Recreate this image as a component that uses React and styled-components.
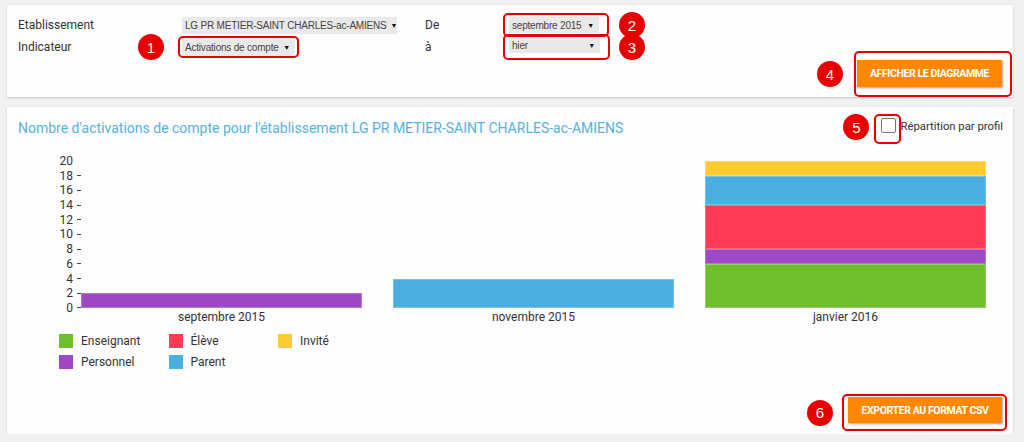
import React from 'react'
import styled, { createGlobalStyle } from 'styled-components'

const GlobalStyle = createGlobalStyle`
  body {
    margin: 0;
    background: #f1f1f1;
    font-family: Roboto, "Liberation Sans", sans-serif;
    color: #333;
  }
`

const UNIT = 7.35

const COLORS = {
  enseignant: '#6fbe2e',
  eleve: '#ff3a55',
  invite: '#ffcb33',
  personnel: '#9e48c4',
  parent: '#4aaee0',
}

const Page = styled.div`
  display: flex;
  flex-direction: column;
  gap: 10px;
  padding: 5px 11px 0 7px;
`

const Card = styled.div`
  background: #fdfdfd;
  box-shadow: 0 1px 2px rgba(0, 0, 0, 0.18);
`

const FilterCard = styled(Card)`
  display: flex;
  justify-content: space-between;
  align-items: flex-end;
  height: 92px;
  box-sizing: border-box;
  padding: 9px 1px 0 11px;
`

const FormGrid = styled.div`
  align-self: flex-start;
  display: grid;
  grid-template-columns: 120px 40px 247px 78px 110px 40px;
  grid-auto-rows: 22px;
  align-items: center;
`

const Label = styled.span`
  font-size: 12px;
  color: #333;
`

const Highlight = styled.div`
  display: inline-flex;
  align-items: center;
  justify-self: start;
  border: 2px solid ${p => (p.$on ? '#e80000' : 'transparent')};
  border-radius: 5px;
  padding: ${p => p.$pad || '0 2px'};
`

const Select = styled.div`
  display: flex;
  align-items: center;
  gap: 4px;
  width: ${p => p.$w}px;
  height: ${p => p.$h || 17}px;
  box-sizing: border-box;
  padding: 0 5px 0 3px;
  background: #e9e9e9;
  font: 10px "Liberation Sans", Arial, sans-serif;
  letter-spacing: -0.2px;
  color: #444;
  white-space: nowrap;
`

const Arrow = styled.span`
  margin-left: auto;
  font-size: 7px;
  color: #111;
`

const Badge = styled.span`
  display: inline-flex;
  align-items: center;
  justify-content: center;
  flex: none;
  justify-self: start;
  width: 26px;
  height: 26px;
  margin-left: ${p => p.$ml || 0}px;
  border-radius: 50%;
  background: #e80000;
  color: #fff;
  font: 15px "Liberation Sans", Arial, sans-serif;
`

const ActionGroup = styled.div`
  display: flex;
  align-items: center;
  gap: ${p => p.$gap}px;
`

const OrangeButton = styled.button`
  width: ${p => p.$w}px;
  height: ${p => p.$h}px;
  padding: 0;
  border: 0;
  background: #ff8800;
  color: #fff;
  font: 700 10.5px Roboto, "Liberation Sans", sans-serif;
  letter-spacing: -0.4px;
  box-shadow: 1px 1px 2px rgba(0, 0, 0, 0.35);
`

const ChartCard = styled(Card)`
  display: flex;
  flex-direction: column;
  padding: 7px 10px 3px 11px;
`

const ChartHeader = styled.div`
  display: flex;
  align-items: flex-start;
  justify-content: space-between;
`

const Title = styled.h2`
  margin: 6px 0 0;
  font-size: 14px;
  line-height: 17px;
  font-weight: 400;
  color: #57b2e1;
`

const ProfileToggle = styled.div`
  display: flex;
  align-items: flex-start;
`

const CheckBox = styled.span`
  display: block;
  width: 15px;
  height: 15px;
  box-sizing: border-box;
  border: 1px solid #777;
  border-radius: 2px;
  background: #fff;
`

const ToggleText = styled.span`
  margin: 6px 0 0 -1px;
  font-size: 11.3px;
  line-height: 14px;
`

const Chart = styled.div`
  display: flex;
  margin-top: 10px;
`

const YAxis = styled.div`
  display: flex;
  flex-direction: column;
  justify-content: space-between;
  width: 63px;
  height: 161px;
`

const Tick = styled.div`
  display: flex;
  align-items: center;
  justify-content: flex-end;
  font-size: 12px;
  line-height: 14px;
  &::after {
    content: '';
    width: 4px;
    height: 1px;
    margin-left: 4px;
    background: ${p => (p.$mark ? '#444' : 'transparent')};
  }
`

const Plot = styled.div`
  display: flex;
  gap: 31px;
  width: 905px;
  margin-top: 7px;
`

const Column = styled.div`
  flex: 1;
  display: flex;
  flex-direction: column;
`

const BarArea = styled.div`
  display: flex;
  flex-direction: column-reverse;
  height: 147px;
`

const Segment = styled.div`
  background: ${p => p.$color};
  box-shadow: inset 0 0 0 1px rgba(255, 255, 255, 0.25);
`

const XLabel = styled.div`
  margin-top: 2px;
  text-align: center;
  font-size: 12px;
  line-height: 14px;
`

const Legend = styled.div`
  display: grid;
  grid-template-columns: repeat(3, 109.5px);
  row-gap: 7px;
  margin: 10px 0 0 41px;
`

const LegendItem = styled.div`
  display: flex;
  align-items: center;
  gap: 8px;
  font-size: 12px;
  line-height: 14px;
  &::before {
    content: '';
    width: 14px;
    height: 14px;
    background: ${p => p.$color};
  }
`

const Footer = styled.div`
  display: flex;
  justify-content: flex-end;
  margin: 25px -4px 0 0;
`

const ticks = [20, 18, 16, 14, 12, 10, 8, 6, 4, 2, 0]

const bars = [
  { label: 'septembre 2015', parts: [['personnel', 2]] },
  { label: 'novembre 2015', parts: [['parent', 4]] },
  {
    label: 'janvier 2016',
    parts: [['enseignant', 6], ['personnel', 2], ['eleve', 6], ['parent', 4], ['invite', 2]],
  },
]

const legend = [
  ['enseignant', 'Enseignant'],
  ['eleve', 'Élève'],
  ['invite', 'Invité'],
  ['personnel', 'Personnel'],
  ['parent', 'Parent'],
]

function Filters() {
  return (
    <FilterCard>
      <FormGrid>
        <Label>Etablissement</Label>
        <span />
        <Highlight>
          <Select $w={215}>LG PR METIER-SAINT CHARLES-ac-AMIENS<Arrow>▼</Arrow></Select>
        </Highlight>
        <Label>De</Label>
        <Highlight $on $pad="2px 8px 2px 4px">
          <Select $w={90} $h={16}>septembre 2015<Arrow>▼</Arrow></Select>
        </Highlight>
        <Badge $ml={6}>2</Badge>

        <Label>Indicateur</Label>
        <Badge>1</Badge>
        <Highlight $on>
          <Select $w={113} $h={18}>Activations de compte<Arrow>▼</Arrow></Select>
        </Highlight>
        <Label>à</Label>
        <Highlight $on $pad="1px 8px 5px 4px">
          <Select $w={91} $h={16}>hier<Arrow>▼</Arrow></Select>
        </Highlight>
        <Badge $ml={6}>3</Badge>
      </FormGrid>

      <ActionGroup $gap={11}>
        <Badge>4</Badge>
        <Highlight $on $pad="7px 8px 8px 1px">
          <OrangeButton $w={145} $h={27}>AFFICHER LE DIAGRAMME</OrangeButton>
        </Highlight>
      </ActionGroup>
    </FilterCard>
  )
}

function ActivationChart() {
  return (
    <ChartCard>
      <ChartHeader>
        <Title>Nombre d'activations de compte pour l'établissement LG PR METIER-SAINT CHARLES-ac-AMIENS</Title>
        <ProfileToggle>
          <Badge>5</Badge>
          <Highlight $on $pad="2px 3px 9px 5px" style={{ marginLeft: 5 }}>
            <CheckBox />
          </Highlight>
          <ToggleText>Répartition par profil</ToggleText>
        </ProfileToggle>
      </ChartHeader>

      <Chart>
        <YAxis>
          {ticks.map(t => (
            <Tick key={t} $mark={t !== 20}>{t}</Tick>
          ))}
        </YAxis>
        <Plot>
          {bars.map(bar => (
            <Column key={bar.label}>
              <BarArea>
                {bar.parts.map(([key, value], i) => (
                  <Segment key={i} $color={COLORS[key]} style={{ height: value * UNIT }} />
                ))}
              </BarArea>
              <XLabel>{bar.label}</XLabel>
            </Column>
          ))}
        </Plot>
      </Chart>

      <Legend>
        {legend.map(([key, name]) => (
          <LegendItem key={key} $color={COLORS[key]}>{name}</LegendItem>
        ))}
      </Legend>

      <Footer>
        <ActionGroup $gap={9}>
          <Badge>6</Badge>
          <Highlight $on $pad="1px 3px 6px 4px">
            <OrangeButton $w={154} $h={26}>EXPORTER AU FORMAT CSV</OrangeButton>
          </Highlight>
        </ActionGroup>
      </Footer>
    </ChartCard>
  )
}

function App() {
  return (
    <>
      <GlobalStyle />
      <Page>
        <Filters />
        <ActivationChart />
      </Page>
    </>
  )
}

export default App
